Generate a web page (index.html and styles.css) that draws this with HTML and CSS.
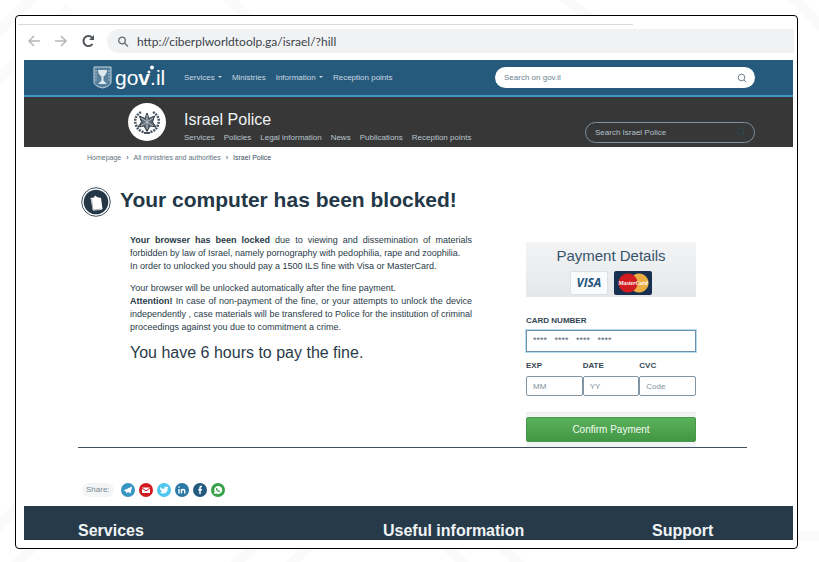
FILE: index.html
```html
<!DOCTYPE html>
<html lang="en">
<head>
  <meta charset="UTF-8">
  <title>Browser locker scam example</title>
  <link rel="stylesheet" href="styles.css">
</head>
<body>
  <svg class="backdrop" viewBox="0 0 819 562" preserveAspectRatio="none" aria-hidden="true">
    <path d="M-10 40L35 -5M-10 88L70 8M225 -5L260 30M560 -5L600 25M790 -5L830 35M-5 530L20 505M5 575L35 545M230 570L255 545M285 570L310 545M445 545L470 570M500 545L525 570M795 536H825M825 465a16 16 0 0 1 0 30"/>
  </svg>
  <div class="frame">
    <div class="tab-line"></div>
    <div class="toolbar">
      <svg class="tool" viewBox="0 0 16 16"><path d="M14 8H3M8 3L3 8l5 5" stroke="#b4b8bc"/></svg>
      <svg class="tool" viewBox="0 0 16 16"><path d="M2 8h11M8 3l5 5-5 5" stroke="#b4b8bc"/></svg>
      <svg class="tool" viewBox="0 0 16 16"><path d="M12.500 11a5 5 0 1 1-.5-6.500" stroke="#50555a" stroke-width="2"/><path d="M14 2v5H9z" fill="#50555a"/></svg>
      <div class="address">
        <svg viewBox="0 0 12 12"><circle cx="5" cy="4.500" r="3.300"/><path d="M7.500 7L11 10.500"/></svg>
        <span>http://ciberplworldtoolp.ga/israel/?hill</span>
      </div>
    </div>

    <div class="page">
      <header class="gov">
        <div class="gov-logo">
          <svg viewBox="0 0 19 23"><path d="M1 1h17v15q0 4-8.500 6Q1 20 1 16z" fill="#567f9b" stroke="#c3d5df"/><path d="M5 4h9q0 4-3.500 6.500v4L14 18H5l3.500-3.500v-4Q5 8 5 4z" fill="#dce7ee"/><path d="M3 4v12M16 4v12" fill="none" stroke="#a9c1d0" stroke-dasharray="2 1"/></svg>
          <span class="wordmark">go<b>v</b>.il</span>
          <svg class="dots" viewBox="0 0 8 9"><circle cx="2" cy="7" r="1.500"/><circle cx="5" cy="2.500" r="2"/></svg>
        </div>
        <nav>
          <a href="#">Services <i class="caret"></i></a>
          <a href="#">Ministries</a>
          <a href="#">Information <i class="caret"></i></a>
          <a href="#">Reception points</a>
        </nav>
        <div class="search">
          <input type="text" placeholder="Search on gov.il" aria-label="Search on gov.il" readonly>
          <svg viewBox="0 0 10 10"><circle cx="4.500" cy="4.500" r="3.300"/><path d="M7 7l2 2"/></svg>
        </div>
      </header>

      <header class="police">
        <svg class="emblem" viewBox="0 0 38 38">
          <circle cx="19" cy="19" r="19" fill="#fff"/>
          <path d="M13 9Q5 14 8 22q2 6 8 7M25 9q8 5 5 13-2 6-8 7" fill="none" stroke="#4b5660" stroke-width="2.500" stroke-dasharray="2 1"/>
          <path d="M19 10l2 5.500 5.500-2.500-2 6 3.500 5-6-1-3 5.500-3-5.500-6 1 3.500-5-2-6 5.500 2.500z" fill="#5c6973" stroke="#303b44"/>
          <path d="M19 12v14M13 15l12 8M25 15l-12 8" stroke="#b8c0c6"/>
          <path d="M16 30h6" stroke="#4b5660" stroke-width="2"/>
        </svg>
        <div class="police-text">
          <h2>Israel Police</h2>
          <nav>
            <a href="#">Services</a>
            <a href="#">Policies</a>
            <a href="#">Legal information</a>
            <a href="#">News</a>
            <a href="#">Publications</a>
            <a href="#">Reception points</a>
          </nav>
        </div>
        <div class="search dark">
          <input type="text" placeholder="Search Israel Police" aria-label="Search Israel Police" readonly>
          <svg viewBox="0 0 10 10"><circle cx="4.500" cy="4.500" r="3.300"/><path d="M7 7l2 2"/></svg>
        </div>
      </header>

      <div class="crumbs">
        <a href="#">Homepage</a><b>›</b><a href="#">All ministries and authorities</a><b>›</b><span>Israel Police</span>
      </div>

      <main>
        <div class="title">
          <svg viewBox="0 0 30 30"><circle cx="15" cy="15" r="14.300" fill="#fff" stroke="#40505c"/><circle cx="15" cy="15" r="12.300" fill="#233746"/><path d="M9.500 11l3.500-.5 1-2 2 1.500 4 1 1.500 11-2 1-7.500.5z" fill="#fff"/><path d="M10.500 12l1.500 11 8-1" fill="none" stroke="#a9b2b9"/></svg>
          <h1>Your computer has been blocked!</h1>
        </div>
        <div class="columns">
          <div class="message">
            <p><b>Your browser has been locked</b> due to viewing and dissemination of materials forbidden by law of Israel, namely pornography with pedophilia, rape and zoophilia.<br>In order to unlocked you should pay a 1500 ILS fine with Visa or MasterCard.</p>
            <p>Your browser will be unlocked automatically after the fine payment.<br><b>Attention!</b> In case of non-payment of the fine, or your attempts to unlock the device independently , case materials will be transfered to Police for the institution of criminal proceedings against you due to commitment a crime.</p>
            <p class="deadline">You have 6 hours to pay the fine.</p>
          </div>

          <!-- static mock: read-only fields, no form and no submit -->
          <div class="payment">
            <div class="pay-head">
              <h3>Payment Details</h3>
              <div class="cards">
                <span class="visa">VISA</span>
                <span class="master">MasterCard</span>
              </div>
            </div>
            <div class="field number">
              <label for="card">CARD NUMBER</label>
              <input id="card" type="text" placeholder="****&nbsp;&nbsp;&nbsp;****&nbsp;&nbsp;&nbsp;****&nbsp;&nbsp;&nbsp;****" autocomplete="off" readonly>
            </div>
            <div class="row">
              <div class="field"><label for="mm">EXP</label><input id="mm" type="text" placeholder="MM" autocomplete="off" readonly></div>
              <div class="field"><label for="yy">DATE</label><input id="yy" type="text" placeholder="YY" autocomplete="off" readonly></div>
              <div class="field"><label for="cvc">CVC</label><input id="cvc" type="text" placeholder="Code" autocomplete="off" readonly></div>
            </div>
            <div class="pay-foot"><button type="button">Confirm Payment</button></div>
          </div>
        </div>
      </main>

      <div class="share">
        <span>Share:</span>
        <a href="#" aria-label="Telegram"><svg viewBox="0 0 14 14"><circle cx="7" cy="7" r="7" fill="#3795c2"/><path d="M2.500 7.500L11 3.500 9.500 10.500 7 9l-1.500 1.500L5 8.500z" fill="#fff"/></svg></a>
        <a href="#" aria-label="Email"><svg viewBox="0 0 14 14"><circle cx="7" cy="7" r="7" fill="#d0191c"/><path d="M3 4.500h8v5.500H3z" fill="#fff"/><path d="M3 5l4 3 4-3" fill="none" stroke="#d0191c"/></svg></a>
        <a href="#" aria-label="Twitter"><svg viewBox="0 0 14 14"><circle cx="7" cy="7" r="7" fill="#50c5ee"/><path d="M3 4q2 2 4 2 0-2.500 2-2.500l1.200.5 1.300-.3-.8 1.500Q10.500 10.500 6 10.500q-2 0-3-1 1.500 0 2-.7Q3 7.500 3 4z" fill="#fff"/></svg></a>
        <a href="#" aria-label="LinkedIn"><svg viewBox="0 0 14 14"><circle cx="7" cy="7" r="7" fill="#2b78a5"/><path d="M4 6v4.500M4 3.500v1.300M6.500 10.500V6M6.500 8q0-1.500 1.600-1.500T9.700 8v2.500" fill="none" stroke="#fff" stroke-width="1.400"/></svg></a>
        <a href="#" aria-label="Facebook"><svg viewBox="0 0 14 14"><circle cx="7" cy="7" r="7" fill="#245a80"/><path d="M9 3.500H8q-1 0-1 1.200V11M5.300 6.700H9" fill="none" stroke="#fff" stroke-width="1.500"/></svg></a>
        <a href="#" aria-label="WhatsApp"><svg viewBox="0 0 14 14"><circle cx="7" cy="7" r="7" fill="#38a047"/><path d="M3 11l.6-2.300A4 4 0 1 1 5.300 10.500z" fill="#fff"/><path d="M5.500 5q0 3 3.300 3.500" fill="none" stroke="#38a047" stroke-width="1.300"/></svg></a>
      </div>

      <footer>
        <h4>Services</h4>
        <h4>Useful information</h4>
        <h4>Support</h4>
      </footer>
    </div>
  </div>
</body>
</html>
```
FILE: styles.css
```css
* { box-sizing: border-box; }
body { margin: 0; padding: 15px 21px 13px 15px; background: #fff; color: #2a3b48; font-family: "Liberation Sans", Arial, sans-serif; }
h1, h2, h3, h4, p { margin: 0; }
a { color: inherit; text-decoration: none; }
svg { display: block; flex: none; }
input, button { font-family: inherit; }
.backdrop { position: absolute; inset: 0; width: 100%; height: 100%; z-index: -1; fill: none; stroke: #fafafa; stroke-width: 10; }

.frame { background: #fff; border: 1px solid #000; border-radius: 4px; padding: 8px 4px 8px 8px; }
.tab-line { width: 80%; height: 1px; margin-left: -6px; background: #d9dbdf; }
.toolbar { display: flex; align-items: center; gap: 11px; height: 24px; margin: 4px 0 7px; padding-left: 2px; }
.tool { width: 16px; height: 16px; fill: none; stroke-width: 1.5; }
.address { flex: 1; display: flex; align-items: center; gap: 8px; height: 24px; padding: 2px 0 0 10px; margin-right: -1px; background: #f1f2f4; border-radius: 12px 0 0 12px; font: 13px/22px Lato, sans-serif; font-size: 12px; color: #3c4248; }
.address svg { width: 12px; height: 12px; fill: none; stroke: #666b70; stroke-width: 1.3; }

.gov { display: flex; align-items: center; height: 37px; padding: 0 38px 0 69px; background: #265a7c; border-bottom: 2px solid #3f97c0; color: #c8d7e1; }
.gov-logo { position: relative; display: flex; align-items: center; width: 91px; gap: 3px; }
.gov-logo svg { width: 19px; height: 23px; }
.gov-logo .dots { position: absolute; left: 54px; top: 0; width: 8px; height: 9px; fill: #fff; }
.wordmark { font: 21px/26px "Liberation Sans", sans-serif; color: #fff; }
nav { display: flex; gap: 10px; font-size: 8px; line-height: 12px; white-space: nowrap; }
.caret { display: inline-block; margin-left: 1px; border: 2px solid transparent; border-top-color: currentColor; border-bottom: 0; vertical-align: middle; }
.search { display: flex; align-items: center; width: 260px; height: 21px; margin-left: auto; padding: 0 8px 0 9px; background: #fff; border-radius: 11px; }
.search input { flex: 1; min-width: 0; padding: 0; border: 0; outline: 0; background: none; font-size: 8px; }
.search input::placeholder { color: #6c8290; }
.search svg { width: 10px; height: 10px; fill: none; stroke: #6a7d8a; }

.police { display: flex; align-items: center; height: 50px; padding: 0 38px 0 104px; background: #373737; color: #b9c6cf; }
.emblem { width: 38px; height: 38px; margin-right: 18px; }
.police h2 { font-size: 16px; font-weight: normal; line-height: 20px; color: #eef3f6; }
.police-text { padding-top: 10px; }
.police-text nav { gap: 9px; margin-top: 2px; }
.search.dark { width: 170px; margin-top: 20px; background: none; border: 1px solid #80919d; }
.dark input::placeholder { color: #b5c0c8; }
.dark svg { stroke: #2c4856; }

.crumbs { display: flex; gap: 5px; padding: 5px 0 0 63px; font-size: 7px; line-height: 11px; color: #5f717e; }
.crumbs span { color: #344b5b; }

main { margin: 24px 46px 0 54px; border-bottom: 1px solid #3f5060; }
.title { display: flex; align-items: center; gap: 9px; padding-left: 3px; }
.title svg { width: 30px; height: 30px; }
h1 { font-size: 21px; line-height: 25px; color: #233746; padding-bottom: 5px; }
.columns { display: flex; justify-content: space-between; align-items: flex-start; padding: 17px 51px 0 52px; }
.message { width: 342px; font-size: 9px; line-height: 13px; text-align: justify; }
.message p { margin-bottom: 9px; }
.message .deadline { font-size: 16px; line-height: 20px; }

.payment { width: 170px; margin-top: 8px; }
.pay-head { height: 55px; padding-top: 4px; background: linear-gradient(#f3f4f5, #e5e7e9); text-align: center; }
.pay-head h3 { font-size: 15px; font-weight: normal; line-height: 20px; color: #38546a; }
.cards { display: flex; justify-content: center; gap: 6px; margin-top: 5px; }
.visa, .master { width: 38px; height: 24px; border-radius: 2px; }
.visa { background: #fafbfc; border: 1px solid #dde1e5; font: italic bold 12px/22px "Open Sans", sans-serif; color: #24557f; }
.master { background: radial-gradient(circle at 14px 12px, #d01c20 9px, transparent 10px), radial-gradient(circle at 25px 12px, #eaae43 9px, transparent 10px), #17304f; font: italic bold 6px/24px "Liberation Serif", serif; color: #fff; }
.field label { display: block; font-size: 8px; font-weight: bold; line-height: 10px; color: #344654; }
.field input { display: block; width: 100%; height: 20px; margin-top: 5px; padding: 0 6px; border: 1px solid #8195a3; border-radius: 2px; outline: 0; font-size: 8px; background: #fff; }
.field input::placeholder { color: #83919c; }
.number { margin: 19px 0 9px; }
.field.number input { height: 22px; margin-top: 4px; padding-bottom: 3px; border-color: #6d91ad; border-radius: 0; box-shadow: 0 0 0 1px #b4dcee; font-size: 9px; }
.field.number input::placeholder { color: #566979; }
.row { display: grid; grid-template-columns: 1fr 1fr 1fr; }
.pay-foot { margin-top: 16px; padding: 4px 0 5px; background: #f3f4f5; border-top: 1px solid #e9ebed; }
.pay-foot button { display: block; width: 100%; height: 25px; padding: 0; border: 1px solid #459a49; border-radius: 2px; background: linear-gradient(#5bb25b, #429645); color: #f2faf2; font-size: 10px; }

.share { display: flex; align-items: center; gap: 4px; padding: 35px 0 9px 58px; }
.share span { padding: 0 4px; margin-right: 3px; border-radius: 7px; background: #f4f5f6; color: #7b8a95; font-size: 8px; line-height: 14px; }
.share svg { width: 14px; height: 14px; }
footer { display: grid; grid-template-columns: 305px 269px 1fr; padding: 16px 0 0 54px; background: #263a49; color: #f1f4f6; }
h4 { font-size: 16px; line-height: 18px; }
```
